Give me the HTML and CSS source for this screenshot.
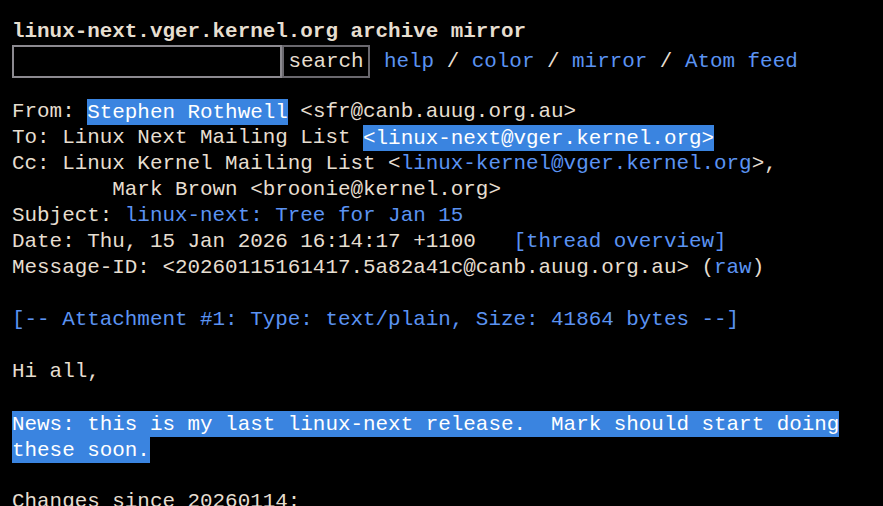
FILE: index.html
```html
<!DOCTYPE html>
<html>
<head>
<meta charset="utf-8">
<title>linux-next: Tree for Jan 15</title>
<link rel="stylesheet" href="styles.css">
</head>
<body>
<form class="top">
<div class="title"><b>linux-next.vger.kernel.org archive mirror</b></div>
<div class="searchrow"><input class="q" type="text" name="q"><button class="btn" type="button">search</button><span class="nav"><a href="#">help</a> / <a href="#">color</a> / <a href="#">mirror</a> / <a href="#">Atom feed</a></span></div>
</form>
<pre class="msg">From: <span class="hl">Stephen Rothwell</span> &lt;sfr@canb.auug.org.au&gt;
To: Linux Next Mailing List <span class="hl">&lt;linux-next@vger.kernel.org&gt;</span>
Cc: Linux Kernel Mailing List &lt;<a href="#">linux-kernel@vger.kernel.org</a>&gt;,
        Mark Brown &lt;broonie@kernel.org&gt;
Subject: <a href="#">linux-next: Tree for Jan 15</a>
Date: Thu, 15 Jan 2026 16:14:17 +1100   <a href="#">[thread overview]</a>
Message-ID: &lt;20260115161417.5a82a41c@canb.auug.org.au&gt; (<a href="#">raw</a>)

<a href="#">[-- Attachment #1: Type: text/plain, Size: 41864 bytes --]</a>

Hi all,

<span class="hl">News: this is my last linux-next release.  Mark should start doing
these soon.</span>

Changes since 20260114:
</pre>
</body>
</html>
```
FILE: styles.css
```css
html, body {
  background: #000;
  margin: 0;
  padding: 0;
}
body {
  padding: 19px 12px 0 12px;
  color: #e6ded0;
  font-family: "Liberation Mono", "DejaVu Sans Mono", monospace;
  font-size: 20.9px;
  line-height: 26px;
  overflow: hidden;
}
a {
  color: #5b93f2;
  text-decoration: none;
}
.top {
  margin: 0;
}
.title {
  height: 26px;
}
.title b {
  font-weight: bold;
}
.searchrow {
  display: flex;
  align-items: center;
  height: 33px;
}
.q {
  box-sizing: border-box;
  width: 270px;
  height: 33px;
  background: #000;
  border: 2px solid #8c8a90;
  margin: 0;
  padding: 0;
}
.btn {
  box-sizing: border-box;
  height: 33px;
  width: 88px;
  background: #000;
  color: #e6ded0;
  border: 2px solid #6a686e;
  margin: 0;
  padding: 0;
  font: inherit;
  line-height: 26px;
}
.nav {
  margin-left: 14px;
}
.msg {
  margin: 21px 0 0 0;
  font: inherit;
  white-space: pre;
}
.hl {
  background: #3a84e0;
  color: #ffffff;
  padding: 1.5px 0;
}
.hl a {
  color: #fff;
}
```
